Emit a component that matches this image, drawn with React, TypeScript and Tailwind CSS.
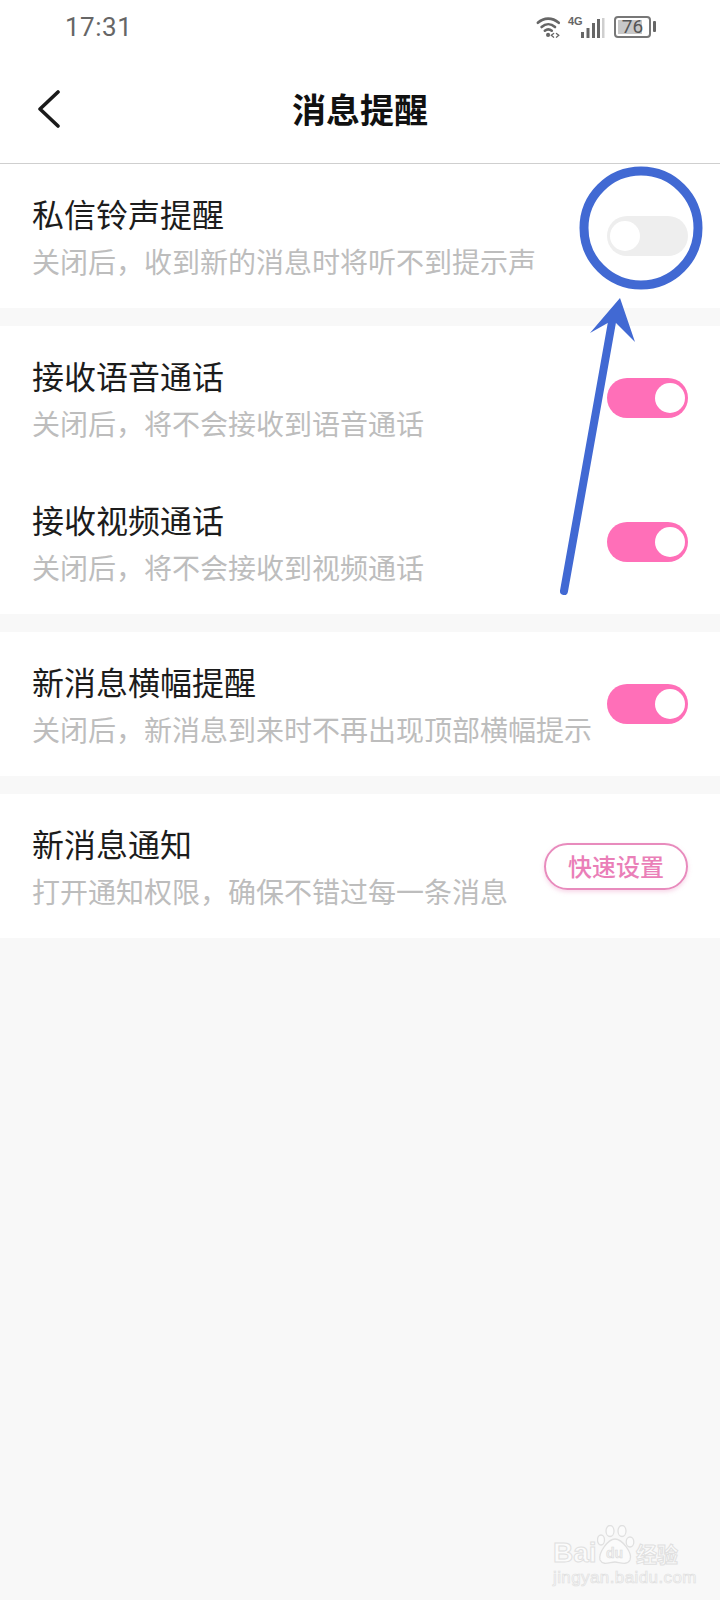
const rows = [
  [
    { title: "私信铃声提醒", desc: "关闭后，收到新的消息时将听不到提示声", on: false },
  ],
  [
    { title: "接收语音通话", desc: "关闭后，将不会接收到语音通话", on: true },
    { title: "接收视频通话", desc: "关闭后，将不会接收到视频通话", on: true },
  ],
  [
    { title: "新消息横幅提醒", desc: "关闭后，新消息到来时不再出现顶部横幅提示", on: true },
  ],
];

const Toggle = ({ on }: { on: boolean }) => (
  <div
    className={`w-[81px] h-[40px] rounded-full flex items-center shrink-0 px-[3px] ${
      on ? "bg-[#ff6fb8] justify-end" : "bg-[#eeeeee] justify-start"
    }`}
  >
    <div className="w-[30px] h-[30px] rounded-full bg-white" />
  </div>
);

const Row = ({ title, desc, children }: { title: string; desc: string; children: React.ReactNode }) => (
  <div className="h-[144px] pl-8 pr-8 flex items-center justify-between">
    <div className="flex flex-col pt-[3px]">
      <div className="text-[32px] leading-[48px] text-[#1c1c1c] mb-[-1px] relative top-[-1px]">{title}</div>
      <div className="text-[28px] leading-[48px] text-[#bdbdbd]">{desc}</div>
    </div>
    {children}
  </div>
);

const StatusIcons = () => (
  <div className="flex items-start text-[#666666]">
    <svg width="26" height="24" viewBox="0 0 28 24" fill="none" stroke="#666666" strokeWidth="2.8" strokeLinecap="round" className="mt-[-1px]">
      <path d="M2 7.5C8.5 1.5 17.5 1.5 24.5 7.5" />
      <path d="M6 12C10.5 8 16 8 20.5 12" />
      <path d="M9.5 16C12 14 14.5 14 17 16" />
      <circle cx="13" cy="20.5" r="2.2" fill="#666666" stroke="none" />
      <path d="M19 19l-2.5 2 2.5 2M22 19l2.5 2-2.5 2" strokeWidth="1.4" />
    </svg>
    <span className="text-[11px] leading-[12px] font-bold font-['Liberation_Sans',sans-serif] ml-[6px] mt-[-1px] w-[13px]">4G</span>
    <svg width="24" height="20" viewBox="0 0 24 20" className="mt-[2px]">
      <rect x="0" y="14" width="3" height="6" fill="#666666" />
      <rect x="5.5" y="10" width="3" height="10" fill="#666666" />
      <rect x="11" y="5" width="3" height="15" fill="#666666" />
      <rect x="16" y="1" width="3" height="19" fill="#666666" />
      <rect x="21" y="0" width="2.5" height="20" fill="#cfcfcf" />
    </svg>
    <div className="ml-[9px] w-[37px] h-[22px] border-2 border-[#777777] rounded-[4px] p-[2px] relative">
      <div className="h-full w-[24px] bg-[#c8c8c8]" />
      <span className="absolute inset-0 flex items-center justify-center text-[19px] leading-none text-[#555555] font-['Roboto',sans-serif]">76</span>
    </div>
    <div className="w-[3px] h-[11px] bg-[#666666] ml-[2px] mt-[5px] rounded-[1px]" />
  </div>
);

export default function App() {
  return (
    <div className="relative w-[720px] h-[1600px] overflow-hidden bg-[#f8f8f8] font-['Noto_Sans_CJK_SC','Noto_Sans',sans-serif]">
      {/* Status bar + title */}
      <header className="bg-white h-[164px] border-b border-[#cfcfcf]">
        <div className="h-[54px] pl-[65px] pr-[64px] flex items-center justify-between">
          <span className="text-[26px] leading-none text-[#666666] font-['Roboto',sans-serif] tracking-[0.5px]">17:31</span>
          <StatusIcons />
        </div>
        <div className="relative h-[109px] flex items-center justify-center">
          <svg width="24" height="38" viewBox="0 0 24 38" fill="none" stroke="#1a1a1a" strokeWidth="3.6" strokeLinecap="round" strokeLinejoin="round" className="absolute left-[37px] top-[36px]">
            <path d="M21 2L3 19L21 36" />
          </svg>
          <h1 className="text-[34px] font-bold text-[#111111]">消息提醒</h1>
        </div>
      </header>

      {/* Settings groups */}
      <div className="flex flex-col gap-[18px]">
        {rows.map((group, i) => (
          <section key={i} className="bg-white">
            {group.map((r) => (
              <Row key={r.title} title={r.title} desc={r.desc}>
                <Toggle on={r.on} />
              </Row>
            ))}
          </section>
        ))}
        <section className="bg-white">
          <Row title="新消息通知" desc="打开通知权限，确保不错过每一条消息">
            <button className="w-[144px] h-[47px] rounded-full border-2 border-[#e88bbd] text-[24px] font-medium text-[#ea7fb8] shadow-[0_2px_4px_rgba(232,139,189,0.35)] flex items-center justify-center shrink-0">
              快速设置
            </button>
          </Row>
        </section>
      </div>

      {/* Blue annotation drawn over the screenshot */}
      <svg width="720" height="1600" viewBox="0 0 720 1600" fill="none" className="absolute inset-0 pointer-events-none">
        <circle cx="641" cy="228" r="57" stroke="#4169d3" strokeWidth="9" />
        <path d="M564 591L612 322" stroke="#4169d3" strokeWidth="8" strokeLinecap="round" />
        <path d="M620 298L635 342L613 320L590 333Z" fill="#4169d3" />
      </svg>

      {/* Baidu watermark */}
      <div className="absolute left-[553px] top-[1523px] w-[130px] text-[#fbfbfb] font-['Liberation_Sans',sans-serif]">
        <div className="relative h-[42px] flex items-end">
          <span className="text-[28px] leading-[24px] font-bold [-webkit-text-stroke:1px_#e0e0e0] w-[44px]">Bai</span>
          <svg width="38" height="40" viewBox="0 0 38 40" fill="#fbfbfb" stroke="#e0e0e0" strokeWidth="1.3" className="shrink-0">
            <ellipse cx="4" cy="15" rx="3.5" ry="5" />
            <ellipse cx="13" cy="6" rx="4" ry="5.5" />
            <ellipse cx="25" cy="6" rx="4" ry="5.5" />
            <ellipse cx="33" cy="17" rx="3.8" ry="5" />
            <path d="M18 14C25 14 36 28 33 35C30 41 22 37 18 37C13 37 6 41 3 35C1 28 11 14 18 14Z" />
            <text x="9" y="33" fontSize="14" fontWeight="700" fill="#f1f1f1" stroke="#d8d8d8" strokeWidth="0.5">du</text>
          </svg>
          <span className="text-[21px] leading-[24px] font-bold [-webkit-text-stroke:1px_#e0e0e0] font-['Noto_Sans_CJK_SC',sans-serif] whitespace-nowrap ml-[1px]">经验</span>
        </div>
        <div className="text-[17px] leading-[20px] mt-[3px] [-webkit-text-stroke:0.7px_#e0e0e0] whitespace-nowrap tracking-[0.4px]">jingyan.baidu.com</div>
      </div>
    </div>
  );
}
